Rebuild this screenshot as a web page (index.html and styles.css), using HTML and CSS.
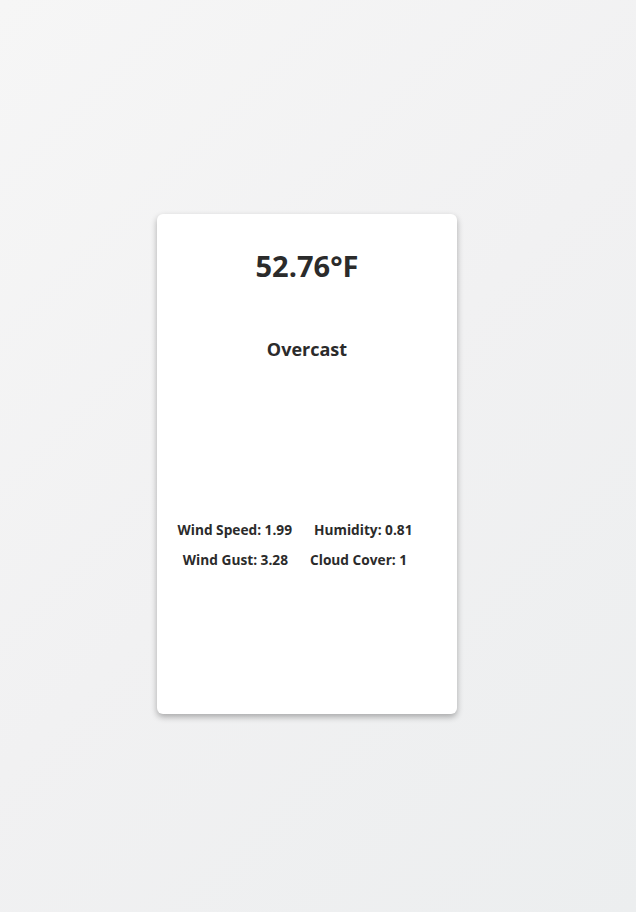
FILE: index.html
```html
<!DOCTYPE html>
<html lang="en">
<head>
<meta charset="utf-8">
<title>Weather</title>
<link rel="stylesheet" href="styles.css">
</head>
<body>
<main class="page">
  <section class="card">
    <h1 class="temp">52.76°F</h1>
    <h3 class="summary">Overcast</h3>
    <div class="details">
      <div class="row">
        <p class="stat">Wind Speed: 1.99</p>
        <p class="stat">Humidity: 0.81</p>
      </div>
      <div class="row">
        <p class="stat">Wind Gust: 3.28</p>
        <p class="stat">Cloud Cover: 1</p>
      </div>
    </div>
  </section>
</main>
</body>
</html>
```
FILE: styles.css
```css
* { box-sizing: border-box; }
html, body { margin: 0; padding: 0; }
body {
  font-family: "Open Sans", "Noto Sans", "Liberation Sans", sans-serif;
  color: #2b2b2b;
  background: linear-gradient(135deg, #f6f6f6 0%, #f1f1f2 50%, #eceeef 100%);
  min-height: 912px;
}
.page {
  min-height: 912px;
  display: flex;
  align-items: center;
  justify-content: center;
  padding: 16px 22px 0 0;
}
.card {
  width: 300px;
  height: 500px;
  background: #fff;
  border-radius: 6px;
  box-shadow: 0 3px 6px rgba(0,0,0,0.3);
  display: flex;
  flex-direction: column;
  align-items: center;
  padding-top: 32px;
}
.temp {
  margin: 0;
  font-size: 29px;
  font-weight: 700;
  line-height: 40px;
}
.summary {
  margin: 50px 0 0;
  font-size: 18px;
  font-weight: 700;
  line-height: 26px;
}
.details {
  margin-top: 158px;
  display: flex;
  flex-direction: column;
  gap: 10px;
  width: 100%;
}
.row {
  display: flex;
  justify-content: center;
  gap: 22px;
  padding-right: 24px;
}
.stat {
  margin: 0;
  font-size: 13.7px;
  font-weight: 700;
  line-height: 20px;
}
```
